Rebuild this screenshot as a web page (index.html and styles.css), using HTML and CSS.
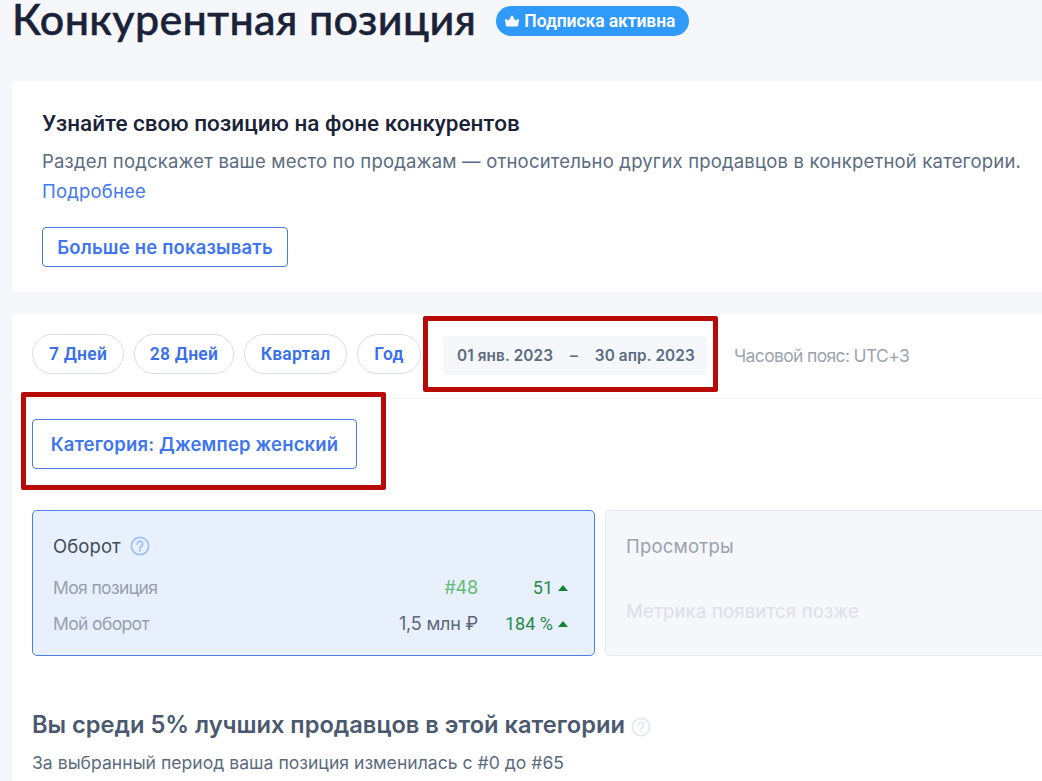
FILE: index.html
```
<!DOCTYPE html>
<html lang="ru">
<head>
  <meta charset="UTF-8">
  <meta name="viewport" content="width=device-width, initial-scale=1.0">
  <title>Конкурентная позиция</title>
  <link rel="stylesheet" href="styles.css">
</head>
<body>
  <div class="page">
    <header class="header">
      <h1>Конкурентная позиция</h1>
      <span class="badge">
        <svg class="crown" viewBox="0 0 14 12" width="14" height="12"><path d="M2.2 11.6Q1 11.6.8 10.2L.1 4.6Q.1 3.7.9 4.1L3.9 5.6 6.1 1Q7 0 7.9 1L10.1 5.6 13.1 4.1Q13.9 3.7 13.9 4.6L13.2 10.2Q13 11.6 11.8 11.6Z" fill="#fff"/></svg>
        <span class="badge-text">Подписка активна</span>
      </span>
    </header>

    <section class="card intro">
      <h2>Узнайте свою позицию на фоне конкурентов</h2>
      <p>Раздел подскажет ваше место по продажам — относительно других продавцов в конкретной категории.</p>
      <a href="#" class="more">Подробнее</a>
      <button type="button" class="btn btn-hide">Больше не показывать</button>
    </section>

    <section class="card report">
      <div class="toolbar">
        <button type="button" class="pill pill-week">7 Дней</button>
        <button type="button" class="pill pill-month">28 Дней</button>
        <button type="button" class="pill pill-quarter">Квартал</button>
        <button type="button" class="pill pill-year">Год</button>
        <div class="date-range">
          <span>01 янв. 2023</span>
          <span class="dash">–</span>
          <span>30 апр. 2023</span>
          <div class="mark mark-date"></div>
        </div>
        <span class="timezone">Часовой пояс: UTC+3</span>
      </div>

      <div class="filter">
        <button type="button" class="btn btn-category">Категория: Джемпер женский</button>
        <div class="mark mark-category"></div>
      </div>

      <div class="metrics">
        <div class="metric active">
          <div class="metric-title">
            Оборот
            <svg class="help" viewBox="0 0 20 20" width="20" height="20" fill="none" stroke="#a0bef8" stroke-width="1.8"><circle cx="10" cy="10" r="8.6"/><path d="M7.3 8a2.7 2.7 0 1 1 4.2 2.2c-.9.6-1.5 1-1.5 2" stroke-linecap="round"/><circle cx="10" cy="14.7" r="1.1" fill="#a0bef8" stroke="none"/></svg>
          </div>
          <div class="metric-row">
            <span class="label">Моя позиция</span>
            <span class="value place">#48</span>
            <span class="delta">51</span>
            <i class="up"></i>
          </div>
          <div class="metric-row">
            <span class="label">Мой оборот</span>
            <span class="value">1,5 млн ₽</span>
            <span class="delta">184 %</span>
            <i class="up"></i>
          </div>
        </div>
        <div class="metric disabled">
          <div class="metric-title">Просмотры</div>
          <div class="metric-note">Метрика появится позже</div>
        </div>
      </div>

      <h3>
        Вы среди 5% лучших продавцов в этой категории
        <svg class="help" viewBox="0 0 20 20" width="20" height="20" fill="none" stroke="#e3e7ef" stroke-width="1.8"><circle cx="10" cy="10" r="8.6"/><path d="M7.3 8a2.7 2.7 0 1 1 4.2 2.2c-.9.6-1.5 1-1.5 2" stroke-linecap="round"/><circle cx="10" cy="14.7" r="1.1" fill="#e3e7ef" stroke="none"/></svg>
      </h3>
      <p class="summary">За выбранный период ваша позиция изменилась с #0 до #65</p>
    </section>
  </div>
</body>
</html>
```
FILE: styles.css
```
* {
  box-sizing: border-box;
  margin: 0;
  padding: 0;
}

body {
  height: 781px;
  overflow: hidden;
  background: #f5f7fb;
  color: #5b6b80;
  font-family: Inter, "Liberation Sans", sans-serif;
  font-size: 18.5px;
  line-height: 30px;
}

button {
  font-family: inherit;
  cursor: pointer;
}

.page {
  padding-left: 12px;
}

/* Header */
.header {
  display: flex;
  align-items: flex-start;
  gap: 20px;
  height: 81px;
}

h1 {
  font-family: Lato, "Open Sans", sans-serif;
  font-size: 43px;
  font-weight: 500;
  line-height: 38px;
  letter-spacing: 0.38px;
  color: #1a2238;
  white-space: nowrap;
  -webkit-text-stroke: 0.5px #1a2238;
}

.badge {
  display: flex;
  align-items: center;
  gap: 5px;
  width: 193px;
  height: 30px;
  margin-top: 6px;
  padding-left: 9px;
  border-radius: 15px;
  background: #2f9afa;
  color: #fff;
  font-family: Roboto, Inter, sans-serif;
  font-size: 17.5px;
  font-weight: 600;
  letter-spacing: -0.08px;
  white-space: nowrap;
}

/* Cards */
.card {
  background: #fff;
  border-radius: 4px 0 0 4px;
}

.intro {
  display: flex;
  flex-direction: column;
  align-items: flex-start;
  height: 211px;
  padding: 27px 0 0 30px;
}

h2 {
  margin-bottom: 8px;
  color: #1a2238;
  font-family: Roboto, Inter, sans-serif;
  font-size: 22.5px;
  font-weight: 500;
}

.intro p {
  letter-spacing: 0.18px;
  white-space: nowrap;
}

.more {
  color: #4378f0;
  letter-spacing: 0.18px;
  text-decoration: none;
}

.btn {
  border: 1px solid #4a7be0;
  border-radius: 4px;
  background: #fff;
  color: #3f76f0;
  font-size: 18.5px;
  font-weight: 600;
  letter-spacing: 0.18px;
  white-space: nowrap;
}

.btn-hide {
  width: 246px;
  height: 40px;
  margin-top: 21px;
}

.report {
  height: 500px;
  margin-top: 22px;
}

/* Period selection */
.toolbar {
  display: flex;
  align-items: flex-start;
  height: 85px;
  padding: 20px 0 0 20px;
  border-bottom: 1px solid #f3f5f9;
}

.pill {
  height: 40px;
  margin-right: 10px;
  border: 1px solid #d9dde8;
  border-radius: 20px;
  background: #fff;
  color: #3a70ea;
  font-family: Roboto, Inter, sans-serif;
  font-size: 17.5px;
  font-weight: 600;
  letter-spacing: 0.25px;
}

.pill-week {
  width: 92px;
}

.pill-month {
  width: 100px;
}

.pill-quarter {
  width: 103px;
}

.pill-year {
  width: 64px;
  margin-right: 22px;
}

.date-range {
  position: relative;
  display: flex;
  align-items: center;
  gap: 17px;
  width: 264px;
  height: 39px;
  margin-top: 2px;
  padding-left: 14px;
  border-radius: 4px;
  background: #f5f7fb;
  font-size: 15.3px;
  font-weight: 600;
  letter-spacing: 0.12px;
  white-space: nowrap;
}

.timezone {
  margin: 7px 0 0 27px;
  color: #9ca4af;
  font-size: 17.5px;
  letter-spacing: -0.65px;
}

/* Red frames around the highlighted controls */
.mark {
  position: absolute;
  border: 5px solid #b80b08;
  border-radius: 2px;
  pointer-events: none;
}

.mark-date {
  left: -20px;
  top: -20px;
  width: 295px;
  height: 76px;
}

.mark-category {
  left: 9px;
  top: -7px;
  width: 365px;
  height: 98px;
}

.filter {
  position: relative;
  padding: 20px 20px 0;
}

.btn-category {
  display: block;
  width: 325px;
  height: 50px;
}

/* Metrics */
.metrics {
  display: grid;
  grid-template-columns: 563px 1fr;
  gap: 10px;
  padding: 41px 0 0 20px;
}

.metric {
  height: 146px;
  padding: 20px 31px 0 20px;
  border: 1px solid #e3e7f0;
  border-radius: 5px;
  background: #f5f7fb;
}

.metric.active {
  border-color: #4a7fe6;
  background: #e8f0fd;
}

.metric.disabled {
  border-right: 0;
  border-radius: 5px 0 0 5px;
}

.metric-title {
  display: flex;
  align-items: center;
  gap: 9px;
  margin-bottom: 9px;
  color: #434b5a;
  letter-spacing: 0.1px;
}

.metric-row {
  display: grid;
  grid-template-columns: 1fr 120px 75px 10px;
  align-items: center;
  height: 36px;
}

.label {
  color: #979fae;
  font-size: 17.5px;
  letter-spacing: -0.63px;
}

.value,
.delta {
  font-size: 18px;
  text-align: right;
  letter-spacing: -0.2px;
}

.value {
  color: #5d6679;
}

.value.place {
  color: #5fbd75;
}

.delta {
  color: #2a8a4a;
  font-family: Roboto, Inter, sans-serif;
  letter-spacing: 0;
}

.up {
  width: 0;
  margin-left: 5px;
  border: 5px solid transparent;
  border-top: 0;
  border-bottom: 6px solid #128236;
}

.disabled .metric-title {
  color: #9aa2ae;
  letter-spacing: 0.2px;
}

.metric-note {
  margin-top: 35px;
  color: #dbe0e9;
  letter-spacing: 0.2px;
}

/* Result */
h3 {
  display: flex;
  align-items: center;
  gap: 6px;
  margin: 54px 0 0 20px;
  color: #4b5970;
  font-size: 23.65px;
  font-weight: 600;
}

h3 .help {
  margin-top: 4px;
}

.summary {
  margin: 8px 0 0 20px;
  font-size: 17.6px;
}
```
